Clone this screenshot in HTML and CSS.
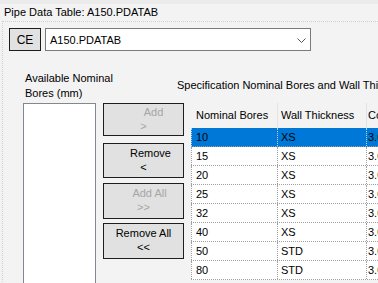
FILE: index.html
```html
<!DOCTYPE html>
<html>
<head>
<meta charset="utf-8">
<link rel="stylesheet" href="styles.css">
</head>
<body>
<div class="topband"></div>
<div class="title">Pipe Data Table: A150.PDATAB</div>
<div class="panel">
  <div class="row1">
    <div class="btn ce">CE</div>
    <div class="combo">
      <span>A150.PDATAB</span>
      <svg class="chev" width="9" height="5" viewBox="0 0 9 5"><path d="M0.5 0.5 L4.5 4.5 L8.5 0.5" fill="none" stroke="#555" stroke-width="1"/></svg>
    </div>
  </div>
  <div class="main">
    <div class="leftcol">
      <div class="label">Available Nominal<br>Bores (mm)</div>
      <div class="listbox"></div>
    </div>
    <div class="btncol">
      <div class="btn mv b-add disabled"><span class="l1">Add</span><span class="l2">&gt;</span></div>
      <div class="btn mv b-remove"><span class="l1">Remove</span><span class="l2">&lt;</span></div>
      <div class="btn mv b-addall disabled"><span class="l1">Add All</span><span class="l2">&gt;&gt;</span></div>
      <div class="btn mv b-removeall"><span class="l1">Remove All</span><span class="l2">&lt;&lt;</span></div>
    </div>
    <div class="rightcol">
      <div class="speclabel">Specification Nominal Bores and Wall Thickness</div>
      <div class="grid">
        <div class="ghead">
          <div class="c c1">Nominal Bores</div>
          <div class="c c2">Wall Thickness</div>
          <div class="c c3">Corrosion</div>
        </div>
        <div class="grow sel"><div class="c c1">10</div><div class="c c2">XS</div><div class="c c3">3.0</div></div>
        <div class="grow"><div class="c c1">15</div><div class="c c2">XS</div><div class="c c3">3.0</div></div>
        <div class="grow"><div class="c c1">20</div><div class="c c2">XS</div><div class="c c3">3.0</div></div>
        <div class="grow"><div class="c c1">25</div><div class="c c2">XS</div><div class="c c3">3.0</div></div>
        <div class="grow"><div class="c c1">32</div><div class="c c2">XS</div><div class="c c3">3.0</div></div>
        <div class="grow"><div class="c c1">40</div><div class="c c2">XS</div><div class="c c3">3.0</div></div>
        <div class="grow"><div class="c c1">50</div><div class="c c2">STD</div><div class="c c3">3.0</div></div>
        <div class="grow"><div class="c c1">80</div><div class="c c2">STD</div><div class="c c3">3.0</div></div>
      </div>
    </div>
  </div>
</div>
</body>
</html>
```
FILE: styles.css
```css
html, body {
  margin: 0;
  padding: 0;
}
body {
  width: 378px;
  height: 283px;
  overflow: hidden;
  background: #f3f3f3;
  font-family: "Liberation Sans", Arial, sans-serif;
  font-size: 11px;
  color: #000;
}
.topband {
  height: 4px;
  background: #ebebeb;
}
.title {
  height: 17px;
  line-height: 17px;
  padding-left: 4px;
  white-space: nowrap;
}
.panel {
  margin-left: 2px;
  border-top: 1px dotted #cfcfcf;
  border-left: 1px dotted #cfcfcf;
  padding: 6px 0 0 6px;
  height: 300px;
}
.row1 {
  display: flex;
  gap: 4px;
  height: 23px;
}
.btn {
  box-sizing: border-box;
  border: 1px solid #1e1e1e;
  background: #e1e1e1;
}
.ce {
  width: 32px;
  height: 23px;
  display: flex;
  align-items: center;
  justify-content: center;
  font-size: 12px;
}
.combo {
  box-sizing: border-box;
  width: 266px;
  height: 23px;
  border: 1px solid #7a7a7a;
  background: #fff;
  display: flex;
  align-items: center;
  justify-content: space-between;
  padding: 0 4px 0 4px;
  font-size: 11px;
}
.chev {
  display: block;
  margin-top: 1px;
}
.main {
  display: flex;
  margin-top: 20px;
}
.leftcol {
  margin-left: 14px;
  width: 73px;
  flex: none;
}
.label {
  height: 32px;
  line-height: 15px;
  padding-left: 2px;
  white-space: nowrap;
}
.listbox {
  box-sizing: border-box;
  width: 73px;
  height: 200px;
  border: 1px solid #828790;
  background: #fff;
}
.btncol {
  margin-left: 7px;
  margin-top: 32px;
  width: 81px;
  flex: none;
  display: flex;
  flex-direction: column;
}
.mv {
  display: flex;
  flex-direction: column;
  align-items: center;
  padding-top: 1px;
  line-height: 14px;
  white-space: nowrap;
}
.mv.disabled {
  color: #a6a6a6;
}
.b-add { height: 33px; margin-bottom: 7px; }
.b-add .l1 { padding-left: 20px; }
.b-remove { height: 35px; margin-bottom: 5px; padding-top: 2px; }
.b-remove .l1 { padding-left: 14px; }
.b-addall { height: 36px; margin-bottom: 4px; padding-top: 2px; }
.b-addall .l1 { padding-left: 12px; }
.b-removeall { height: 36px; padding-top: 2px; }
.rightcol {
  flex: none;
  width: 400px;
}
.speclabel {
  margin-left: -7px;
  margin-top: 7px;
  height: 14px;
  line-height: 14px;
  margin-bottom: 11px;
  white-space: nowrap;
}
.grid {
  margin-left: 7px;
}
.ghead {
  display: flex;
  height: 25px;
  box-sizing: border-box;
}
.ghead .c {
  line-height: 25px;
  border-left: 1px solid transparent;
  border-right: 1px solid #e3e3e3;
}
.ghead .c2, .ghead .c3 {
  border-left: none;
}
.c {
  box-sizing: border-box;
  white-space: nowrap;
  overflow: hidden;
  flex: none;
}
.c1 {
  width: 87px;
  padding-left: 4px;
}
.c2 {
  width: 89px;
  padding-left: 3px;
}
.c3 {
  width: 120px;
  padding-left: 1px;
}
.grow {
  display: flex;
  height: 19px;
  box-sizing: border-box;
  background: #fff;
  border-bottom: 1px dotted #a0a0a0;
}
.grow .c {
  line-height: 18px;
  border-right: 1px dotted #a0a0a0;
}
.grow .c1 {
  border-left: 1px dotted #a0a0a0;
}
.grow .c2, .grow .c3 {
  border-left: none;
}
.grow.sel {
  background: #0078d7;
}
.grow.sel .c {
  border-color: #b8d4f0;
}
```
